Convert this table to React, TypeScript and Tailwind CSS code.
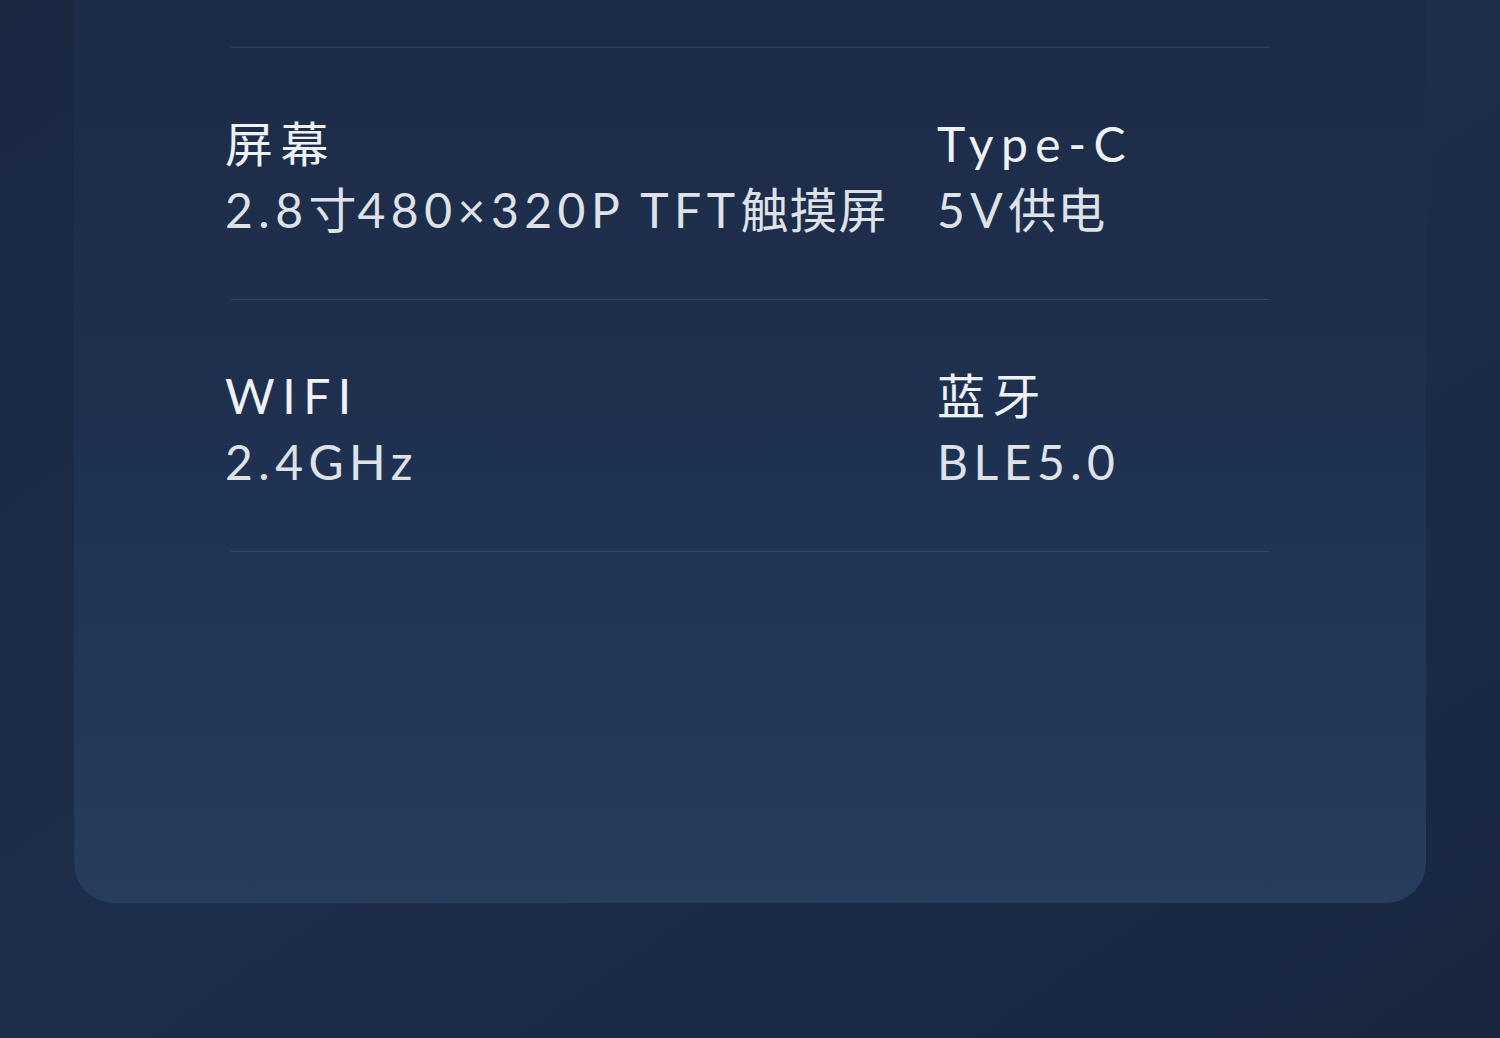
import React from 'react'

const specs = [
  [
    { title: '屏幕', value: '2.8寸480×320P TFT触摸屏' },
    { title: 'Type-C', value: '5V供电' },
  ],
  [
    { title: 'WIFI', value: '2.4GHz' },
    { title: '蓝牙', value: 'BLE5.0' },
  ],
]

// CJK glyphs sit tighter than the spaced-out latin text
function Spaced({ text }: { text: string }) {
  return (
    <>
      {text.split(/([\u4e00-\u9fff]+)/).map((part, i) =>
        /[\u4e00-\u9fff]/.test(part) ? (
          <span key={i} className="tracking-[1px]">{part}</span>
        ) : (
          <span key={i}>{part}</span>
        )
      )}
    </>
  )
}

function Spec({ title, value }: { title: string; value: string }) {
  return (
    <div className="flex flex-col">
      <div className="text-[48px] leading-[66px] tracking-[7.5px] text-[#eef1f5]">{title}</div>
      <div className="text-[48px] leading-[66px] tracking-[5.5px] text-[#dde2e8]">
        <Spaced text={value} />
      </div>
    </div>
  )
}

export default function App() {
  return (
    <div
      className="w-[1500px] h-[1038px] overflow-hidden bg-gradient-to-br from-[#1a2842] via-[#1d2e4c] to-[#18263f]"
      style={{ fontFamily: 'Lato, "Noto Sans CJK SC", sans-serif' }}
    >
      <div className="mx-[74px] h-[903px] rounded-b-[40px] bg-gradient-to-b from-[#1c2b47] via-[#1f3150] to-[#263d5d] px-[157px] pt-[47px]">
        {specs.map((row, i) => (
          <div key={i}>
            <div className="h-px bg-white/10" />
            <div className="grid h-[251px] grid-cols-[712px_1fr] items-center -ml-[6px] pt-[6px]">
              {row.map((s) => (
                <Spec key={s.title} title={s.title} value={s.value} />
              ))}
            </div>
          </div>
        ))}
        <div className="h-px bg-white/10" />
      </div>
    </div>
  )
}
